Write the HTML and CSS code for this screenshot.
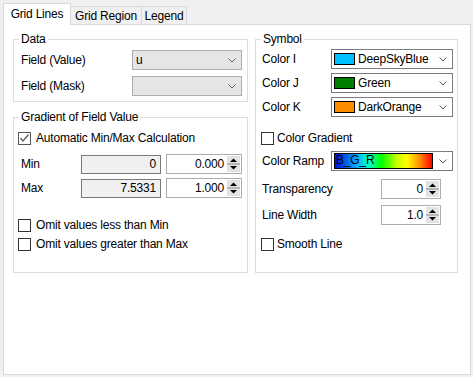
FILE: index.html
```html
<!DOCTYPE html>
<html>
<head>
<meta charset="utf-8">
<link rel="stylesheet" href="styles.css">
</head>
<body>
<div class="tabs">
  <div class="tab active">Grid Lines</div>
  <div class="tab t-region">Grid Region</div>
  <div class="tab t-legend">Legend</div>
</div>
<div class="panel">
  <div class="col">
    <fieldset class="group">
      <legend>Data</legend>
      <div class="gbody data-body">
        <div class="row">
          <span class="lbl w-data">Field (Value)</span>
          <div class="combo gray w-dcombo"><span class="ctext">u</span><svg class="chev" width="8" height="5" viewBox="0 0 8 5"><polyline points="0.5,0.5 4,4 7.5,0.5" fill="none" stroke="#606060" stroke-width="1"/></svg></div>
        </div>
        <div class="row mt6">
          <span class="lbl w-data">Field (Mask)</span>
          <div class="combo gray w-dcombo"><span class="ctext"></span><svg class="chev" width="8" height="5" viewBox="0 0 8 5"><polyline points="0.5,0.5 4,4 7.5,0.5" fill="none" stroke="#606060" stroke-width="1"/></svg></div>
        </div>
      </div>
    </fieldset>
    <fieldset class="group grow mt8">
      <legend>Gradient of Field Value</legend>
      <div class="gbody grad-body">
        <div class="crow left-cb mt6">
          <span class="cb checked"><svg width="11" height="11" viewBox="0 0 11 11"><polyline points="1.5,5 4,8 9.5,1.5" fill="none" stroke="#5a5a5a" stroke-width="1.2"/></svg></span>
          <span>Automatic Min/Max Calculation</span>
        </div>
        <div class="row mt8">
          <span class="lbl w-min">Min</span>
          <div class="ro">0</div>
          <div class="num w-num1"><span>0.000</span><svg class="spin" width="13" height="16" viewBox="0 0 13 16"><rect x="0" y="0" width="13" height="16" fill="#e3e3e3"/><line x1="0" y1="8" x2="13" y2="8" stroke="#8a8a8a"/><polygon points="3,6 6.5,2.5 10,6" fill="#000"/><polygon points="3,10 10,10 6.5,13.5" fill="#000"/></svg></div>
        </div>
        <div class="row mt4">
          <span class="lbl w-min">Max</span>
          <div class="ro">7.5331</div>
          <div class="num w-num1"><span>1.000</span><svg class="spin" width="13" height="16" viewBox="0 0 13 16"><rect x="0" y="0" width="13" height="16" fill="#e3e3e3"/><line x1="0" y1="8" x2="13" y2="8" stroke="#8a8a8a"/><polygon points="3,6 6.5,2.5 10,6" fill="#000"/><polygon points="3,10 10,10 6.5,13.5" fill="#000"/></svg></div>
        </div>
        <div class="crow left-cb mt19">
          <span class="cb"></span>
          <span>Omit values less than Min</span>
        </div>
        <div class="crow left-cb mt3">
          <span class="cb"></span>
          <span>Omit values greater than Max</span>
        </div>
      </div>
    </fieldset>
  </div>
  <div class="col">
    <fieldset class="group grow">
      <legend>Symbol</legend>
      <div class="gbody sym-body">
        <div class="row">
          <span class="lbl w-sym">Color I</span>
          <div class="combo white w-scombo"><span class="sw sw-blue"></span><span class="ctext">DeepSkyBlue</span><svg class="chev" width="8" height="5" viewBox="0 0 8 5"><polyline points="0.5,0.5 4,4 7.5,0.5" fill="none" stroke="#606060" stroke-width="1"/></svg></div>
        </div>
        <div class="row mt4">
          <span class="lbl w-sym">Color J</span>
          <div class="combo white w-scombo"><span class="sw sw-green"></span><span class="ctext">Green</span><svg class="chev" width="8" height="5" viewBox="0 0 8 5"><polyline points="0.5,0.5 4,4 7.5,0.5" fill="none" stroke="#606060" stroke-width="1"/></svg></div>
        </div>
        <div class="row mt4">
          <span class="lbl w-sym">Color K</span>
          <div class="combo white w-scombo"><span class="sw sw-orange"></span><span class="ctext">DarkOrange</span><svg class="chev" width="8" height="5" viewBox="0 0 8 5"><polyline points="0.5,0.5 4,4 7.5,0.5" fill="none" stroke="#606060" stroke-width="1"/></svg></div>
        </div>
        <div class="crow right-cb mt13">
          <span class="cb"></span>
          <span>Color Gradient</span>
        </div>
        <div class="row mt5">
          <span class="lbl w-sym">Color Ramp</span>
          <div class="combo white w-scombo"><span class="ramp">B_G_R</span><svg class="chev" width="8" height="5" viewBox="0 0 8 5"><polyline points="0.5,0.5 4,4 7.5,0.5" fill="none" stroke="#606060" stroke-width="1"/></svg></div>
        </div>
        <div class="row mt8">
          <span class="lbl w-symnum">Transparency</span>
          <div class="num w-num2"><span>0</span><svg class="spin" width="13" height="16" viewBox="0 0 13 16"><rect x="0" y="0" width="13" height="16" fill="#e3e3e3"/><line x1="0" y1="8" x2="13" y2="8" stroke="#8a8a8a"/><polygon points="3,6 6.5,2.5 10,6" fill="#000"/><polygon points="3,10 10,10 6.5,13.5" fill="#000"/></svg></div>
        </div>
        <div class="row mt6">
          <span class="lbl w-symnum">Line Width</span>
          <div class="num w-num2"><span>1.0</span><svg class="spin" width="13" height="16" viewBox="0 0 13 16"><rect x="0" y="0" width="13" height="16" fill="#e3e3e3"/><line x1="0" y1="8" x2="13" y2="8" stroke="#8a8a8a"/><polygon points="3,6 6.5,2.5 10,6" fill="#000"/><polygon points="3,10 10,10 6.5,13.5" fill="#000"/></svg></div>
        </div>
        <div class="crow right-cb mt11">
          <span class="cb"></span>
          <span>Smooth Line</span>
        </div>
      </div>
    </fieldset>
  </div>
</div>
</body>
</html>
```

FILE: styles.css
```css
html, body {
  margin: 0;
  padding: 0;
}
body {
  background: #f0f0f0;
  font-family: "Liberation Sans", Arial, sans-serif;
  font-size: 12px;
  letter-spacing: -0.2px;
  color: #000;
  width: 473px;
  height: 377px;
  overflow: hidden;
}

/* tabs */
.tabs {
  display: flex;
  align-items: flex-end;
  height: 24px;
  padding-left: 3px;
}
.tab {
  box-sizing: border-box;
  height: 18px;
  border: 1px solid #d9d9d9;
  border-bottom: none;
  background: #f0f0f0;
  display: flex;
  align-items: center;
  justify-content: center;
  margin-left: -1px;
  padding-top: 1px;
}
.tab.active {
  margin-left: 0;
  width: 68px;
  height: 22px;
  margin-bottom: -1px;
  background: #fff;
  position: relative;
  z-index: 1;
  padding-top: 0;
  padding-bottom: 2px;
}
.t-region { width: 72px; }
.t-legend { width: 46px; }

/* panel */
.panel {
  box-sizing: border-box;
  width: 468px;
  height: 351px;
  margin-left: 3px;
  background: #fff;
  border: 1px solid #d9d9d9;
  padding: 7px 0 0 9px;
  display: grid;
  grid-template-columns: 235px 203px;
  column-gap: 7px;
  align-items: stretch;
  align-content: start;
}
.col {
  display: flex;
  flex-direction: column;
}

/* group boxes */
.group {
  margin: 0;
  padding: 0;
  border: 1px solid #dcdcdc;
  min-width: 0;
}
.group legend {
  margin-left: 5px;
  padding: 0 2px;
  line-height: 14px;
  font-size: 12px;
}
.grow { flex: 1; }

.data-body { padding: 4px 5px 5px 7px; }
.grad-body { padding: 0 5px 0 7px; }
.sym-body { padding: 3px 4px 20px 6px; }

.mt3 { margin-top: 3px; }
.mt4 { margin-top: 4px; }
.mt5 { margin-top: 5px; }
.mt6 { margin-top: 6px; }
.mt8 { margin-top: 8px; }
.mt11 { margin-top: 11px; }
.mt13 { margin-top: 13px; }
.mt19 { margin-top: 19px; }

.row {
  display: flex;
  align-items: center;
  height: 20px;
}
.lbl { flex: none; }
.w-data { width: 111px; }
.w-min { width: 60px; }
.w-sym { width: 69px; }
.w-symnum { width: 119px; }

/* combos */
.combo {
  box-sizing: border-box;
  height: 20px;
  display: flex;
  align-items: center;
  padding: 0 5px 0 3px;
}
.combo.gray {
  background: #e5e5e5;
  border: 1px solid #adadad;
}
.combo.white {
  background: #fff;
  border: 1px solid #7a7a7a;
  padding-left: 2px;
}
.w-dcombo { width: 110px; }
.w-scombo { width: 122px; }
.ctext {
  flex: 1;
  white-space: nowrap;
}
.chev { flex: none; margin-left: auto; }

.sw {
  flex: none;
  box-sizing: border-box;
  width: 21px;
  height: 12px;
  border: 1px solid #000;
  margin-right: 3px;
}
.sw-blue { background: #00bfff; }
.sw-green { background: #008000; }
.sw-orange { background: #ff8c00; }

.ramp {
  box-sizing: border-box;
  width: 99px;
  height: 16px;
  border: 1px solid #000;
  line-height: 13px;
  padding-left: 1px;
  background: linear-gradient(to right, #0010d8 0%, #00a8ff 22%, #00ffd0 34%, #00ff00 48%, #c8ff00 64%, #ffff00 74%, #ff9000 87%, #ff0000 100%);
}

/* text boxes */
.ro {
  box-sizing: border-box;
  width: 80px;
  height: 19px;
  background: #f0f0f0;
  border: 1px solid #7a7a7a;
  text-align: right;
  padding-right: 4px;
  line-height: 17px;
  margin-right: 5px;
}
.num {
  box-sizing: border-box;
  height: 20px;
  background: #fff;
  border: 1px solid #adadad;
  display: flex;
  align-items: center;
  justify-content: flex-end;
  padding-right: 1px;
}
.w-num1 { width: 76px; }
.w-num2 { width: 60px; }
.spin { flex: none; margin-left: 3px; }

/* checkboxes */
.crow {
  display: flex;
  align-items: center;
  height: 16px;
  white-space: nowrap;
}
.left-cb { margin-left: -3px; gap: 5px; }
.right-cb { margin-left: -1px; gap: 3px; }
.cb {
  flex: none;
  box-sizing: border-box;
  width: 13px;
  height: 13px;
  border: 1px solid #333;
  background: #fff;
  display: flex;
  align-items: center;
  justify-content: center;
}
.cb.checked { border-color: #555; }
```
